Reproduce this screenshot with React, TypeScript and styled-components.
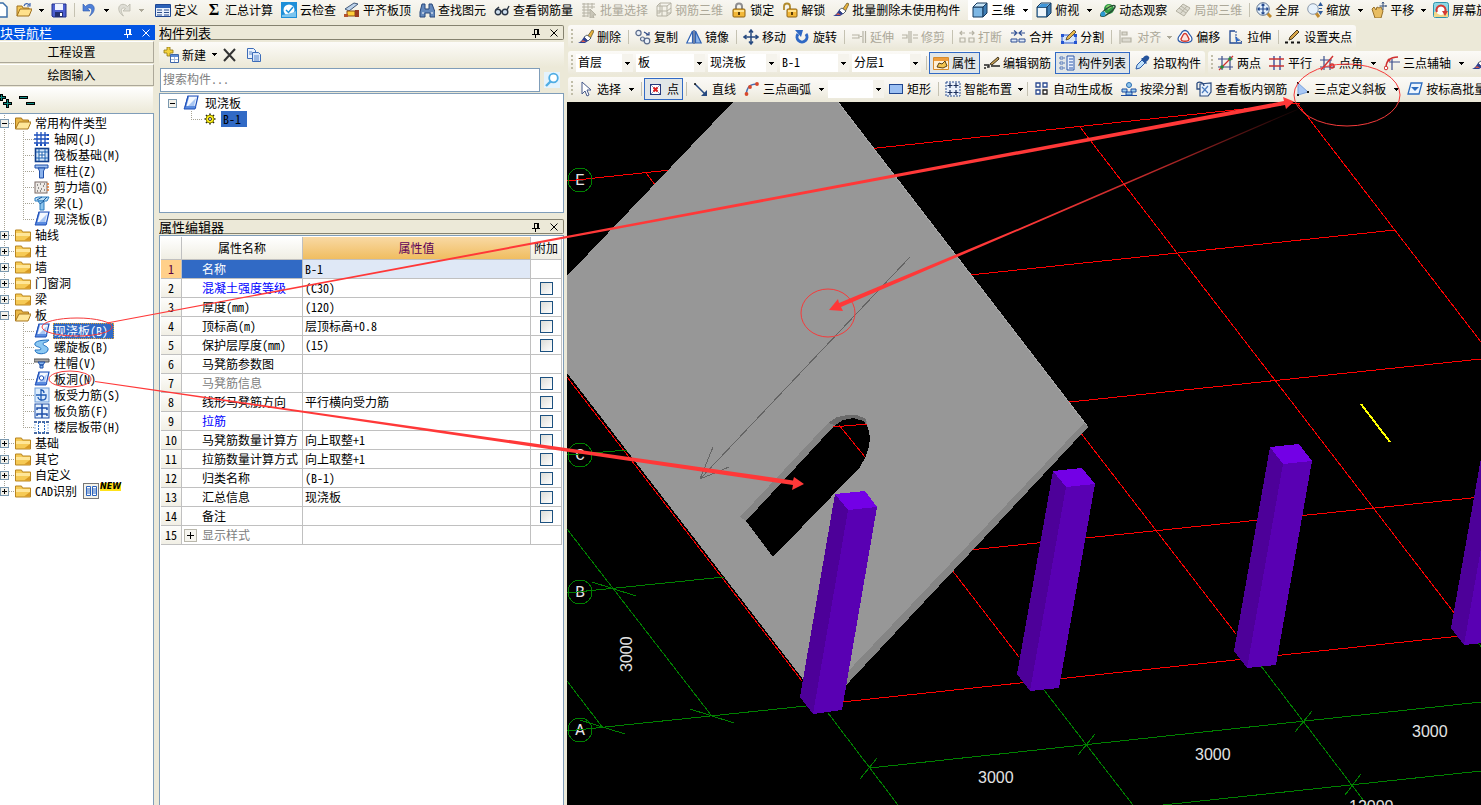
import React from "react";
import styled, { createGlobalStyle, css } from "styled-components";

const face = "#ece9d8";
const sunken = "#7f9db9";
const accent = "#316ac5";

const GlobalStyle = createGlobalStyle`
  * { box-sizing: border-box; }
  body {
    margin: 0;
    background: ${face};
    color: #000;
    font: 12px/16px "Noto Sans CJK SC", "Liberation Sans", sans-serif;
    font-feature-settings: "hwid";
  }
  button, input, select { font: inherit; font-feature-settings: inherit; color: inherit; margin: 0; }
`;

/* ---------- icons ---------- */

const slab = (
  <>
    <path d="M5 1h10l-2.500 11H2z" fill="#dce8fb" stroke="#1f4fb8" strokeWidth="1.200" />
    <path d="M5 1L2 12l-1 2h11l.8-2" fill="#5b8ce0" stroke="#1f4fb8" />
    <path d="M6 2h7.600l-2 9H3.500z" fill="#f5f9ff" />
    <path d="M13 3l-2 8H5z" fill="#a9c6f3" />
  </>
);
const brush = (
  <>
    <path d="M9 8l5-7 2 1-4 8z" fill="#e8b23c" stroke="#5a4a20" strokeWidth=".7" />
    <path d="M6 8l3-2 4 3-3 3z" fill="#fff" stroke="#345" strokeWidth=".8" />
    <path d="M6 8l4 4-3 2H0c3-1 4-3 6-6z" fill="#2c3f92" />
    <path d="M5 11l3 2H3z" fill="#d65a4a" />
  </>
);
const cube = (
  <>
    <path d="M1 5h10v10H1z" fill="#7db7e4" stroke="#173a5e" />
    <path d="M1 5l4-4h10l-4 4z" fill="#c7e4f7" stroke="#173a5e" />
    <path d="M11 5l4-4v10l-4 4z" fill="#3f7db4" stroke="#173a5e" />
  </>
);
const pencil = <path d="M5 11l1-3 7-7 2 2-7 7z" fill="#e8b84a" stroke="#4a3a20" strokeWidth=".8" />;

const glyphs: Record<string, React.ReactNode> = {
  page: <path d="M3 1h8l4 4v10H3z" fill="#fff" stroke="#3b6ea8" strokeWidth="1.500" />,
  open: (
    <>
      <path d="M1 14V4h5l1 2h6v2" fill="#f5c95a" stroke="#a0701c" />
      <path d="M1 14l3-7h12l-3 7z" fill="#ffe18c" stroke="#a0701c" />
      <path d="M8 4c1-3 4-3 5-1m1-2v3h-3" fill="none" stroke="#3d66b0" strokeWidth="1.200" />
    </>
  ),
  save: (
    <>
      <path d="M1 2h14v13H2l-1-1z" fill="#4c5fd0" stroke="#20308a" />
      <path d="M4 2h8v6H4z" fill="#eef2ff" />
      <path d="M4 10h8v5H4z" fill="#222f70" />
      <path d="M9 11h2v3H9z" fill="#fff" />
    </>
  ),
  undo: <path d="M2 2v7h7L6.500 6.500c4-2 6 2 2 7.500 7-4 6-13-1-11.500-1 .2-2 1-3 2z" fill="#4f80d8" stroke="#2a56aa" strokeWidth=".6" />,
  redo: <path d="M14 2v7H7l2.500-2.500c-4-2-6 2-2 7.500-7-4-6-13 1-11.500 1 .2 2 1 3 2z" fill="#deddd5" stroke="#b9b7ab" strokeWidth=".8" />,
  define: (
    <>
      <path d="M.5 2.500h15v12H.5z" fill="#e9f1fd" stroke="#1d4694" />
      <path d="M1 3h14v3H1z" fill="#2c62b8" />
      <path d="M2 8h5M2 10.500h5M2 13h5M9 8h5M9 10.500h5M9 13h5" stroke="#2c4f8c" />
    </>
  ),
  cloud: (
    <>
      <rect width="16" height="16" fill="#1e8fd8" />
      <circle cx="8" cy="8" r="5.500" fill="#fff" />
      <path d="M1 13c3-1 9-1 14-4v6H1z" fill="#7cc4ee" />
      <path d="M5 8l2.500 2.500L12 5" fill="none" stroke="#1e8fd8" strokeWidth="1.500" />
    </>
  ),
  level: (
    <>
      <path d="M1 7l9-6 4 1-9 7z" fill="#bcd2ea" stroke="#41597a" />
      <path d="M3 9h8v5H3z" fill="#ffcf3a" stroke="#8a4b12" />
      <path d="M11 8h4v7h-4z" fill="#9a3c24" />
      <path d="M0 12h4v3H0z" fill="#b5532c" />
    </>
  ),
  find: (
    <>
      <path d="M3 2h3v5h4V2h3l3 8v5h-5v-4H6v4H1v-5z" fill="#6489bd" stroke="#27477a" />
      <path d="M3 11h2M12 11h2" stroke="#fff" />
    </>
  ),
  glasses: (
    <g fill="#cfe0f0" stroke="#2b3646" strokeWidth="1.400">
      <circle cx="4" cy="10" r="2.800" />
      <circle cx="11" cy="10" r="2.800" />
      <path d="M6.500 9.500h2M13 8l2-4M1.500 8L5 5" fill="none" />
    </g>
  ),
  pick: (
    <g stroke="#b5b2a4" fill="none">
      <path d="M1 2h13M1 5h13M1 8h8M1 11h8M1 14h6M3 1v14M7 1v14M11 1v6" />
      <path d="M9 7l6 6-3 0 1 3-2-1-2 1z" fill="#c9c6b8" />
    </g>
  ),
  mesh: (
    <g stroke="#b5b2a4" fill="none">
      <path d="M1 4h10v10H1zM4 1h11v10h-4M1 4l3-3M11 4l4-3M11 14l4-3M4 1v10H1M1 9h10l4-3M6 4v10" />
    </g>
  ),
  lock: (
    <>
      <path d="M5 8V4.500a3 3 0 016 0V8" fill="none" stroke="#8e8e90" strokeWidth="2" />
      <rect x="2" y="7" width="12" height="8" rx="1" fill="#f3b838" stroke="#8e6212" />
      <path d="M3 8h10v2H3z" fill="#ffe08a" />
      <path d="M8 10v3" stroke="#5a3c06" strokeWidth="2" />
    </>
  ),
  unlock: (
    <>
      <path d="M2 8V4.500a3 3 0 016 0V7" fill="none" stroke="#b08a2c" strokeWidth="1.800" />
      <rect x="5" y="7" width="10" height="8" rx="1" fill="#f3b838" stroke="#8e6212" />
      <path d="M6 8h8v2H6z" fill="#ffe08a" />
      <path d="M10 10v3" stroke="#5a3c06" strokeWidth="2" />
    </>
  ),
  brush,
  cube,
  top: (
    <>
      {cube}
      <path d="M2 6h8v8H2z" fill="#eef5fb" />
      <path d="M2 5l3-3h8l-3 3z" fill="#3f95d8" />
    </>
  ),
  orbit: (
    <>
      <circle cx="9" cy="7" r="5" fill="#2f9a45" />
      <path d="M6 5c2-3 5-2 6 0l-4 3z" fill="#8ad06c" />
      <path d="M1 14c-2-3 12-13 14-10 1 3-11 12-14 10z" fill="none" stroke="#274a36" strokeWidth="1.400" />
      <circle cx="3" cy="12" r="2.500" fill="#2a9ad0" />
    </>
  ),
  partial: (
    <g fill="#dddbd0" stroke="#b5b2a4">
      <path d="M1 9l7-7 7 4-6 8z" />
      <path d="M4 6l7 5M6 4l7 5M5 12l7-8" fill="none" />
    </g>
  ),
  fit: (
    <>
      <path d="M11 11l4 4" stroke="#c08a30" strokeWidth="3" />
      <circle cx="7" cy="7" r="6.300" fill="#e3f0fc" stroke="#5a6f8e" />
      <path d="M7 2v10M2 7h10M5.500 3.500L7 2l1.500 1.500M5.500 10.500L7 12l1.500-1.500M3.500 5.500L2 7l1.500 1.500M10.500 5.500L12 7l-1.500 1.500" fill="none" stroke="#24498e" strokeWidth="1.200" />
    </>
  ),
  zoom: (
    <>
      <path d="M9 11l3 4" stroke="#c08a30" strokeWidth="3" />
      <circle cx="6" cy="7" r="5.300" fill="#e6f1fb" stroke="#8b99ab" />
      <path d="M13.500 0l2.500 4h-5zM13.500 13l2.500-4h-5zM12 6h3v1h-3z" fill="#2f5b9c" />
    </>
  ),
  pan: (
    <>
      <path d="M1 7l2-2 2 3 1-3 2 1 2-1 2 4-2 7H4z" fill="#e8bd62" stroke="#96702a" />
      <path d="M12 0v8M8.500 4h7M11 1.500L12 0l1 1.500M14.500 3l1 1-1 1" fill="none" stroke="#34507c" />
    </>
  ),
  rotateScreen: (
    <>
      <rect x=".5" y=".5" width="15" height="15" rx="2" fill="#8fd7e4" stroke="#2f93ae" />
      <path d="M1 10h14v5H1z" fill="#f2d78a" />
      <circle cx="8" cy="8" r="5" fill="#fff" />
      <path d="M4 10a4.500 4.500 0 118 0" fill="none" stroke="#d43a34" strokeWidth="2" />
      <path d="M9 9h6l-3 5z" fill="#d43a34" />
    </>
  ),
  copyShape: (
    <g fill="#eaf0f8" stroke="#5a6b8c" strokeWidth="1.200">
      <circle cx="3.500" cy="4" r="2.600" />
      <circle cx="12" cy="12" r="2.800" />
      <circle cx="7.500" cy="10" r="2" />
      <path d="M9 3l5 3m0-3v3h-3" fill="none" stroke="#2f4a86" />
    </g>
  ),
  mirror: (
    <g strokeWidth="1.200">
      <path d="M6.500 2v12H.8z" fill="#fff" stroke="#2f62b4" />
      <path d="M9.500 2v12h5.700z" fill="#8db5ea" stroke="#2f62b4" />
      <path d="M8 1v14" stroke="#1d3f80" />
    </g>
  ),
  move: (
    <path d="M8 1v14M1 8h14M6 3.500L8 1l2 2.500M6 12.500L8 15l2-2.500M3.500 6L1 8l2.500 2M12.500 6L15 8l-2.500 2" fill="none" stroke="#274a80" strokeWidth="1.500" />
  ),
  rotate: (
    <>
      <path d="M4 5a5 5 0 108 0" fill="none" stroke="#2f68c4" strokeWidth="3" />
      <path d="M1 1h8L7 8z" fill="#2f68c4" />
    </>
  ),
  extend: <path d="M1 6h7v3H1M9 7.500h2M12 2v12M14.500 2v12" fill="none" stroke="#b5b2a4" strokeWidth="1.200" />,
  trim: <path d="M0 6h5v3H0M7 2v12M9 2v12M11 6h5M11 9h5" fill="none" stroke="#b5b2a4" strokeWidth="1.200" />,
  breakUp: <path d="M1 9h5v4H1zM10 9h5v4h-5zM1 4h5M10 4h5M3 2L1 4l2 2M13 2l2 2-2 2" fill="none" stroke="#b5b2a4" strokeWidth="1.200" />,
  merge: (
    <>
      <path d="M1 10h6v3H1zM9 10h6v3H9z" fill="#dfe9f8" stroke="#2f4f94" />
      <path d="M1 4h5M10 4h5M4 1.500L7 4 4 6.500M12 1.500L9 4l3 2.500" fill="none" stroke="#2f4f94" strokeWidth="1.200" />
    </>
  ),
  split: (
    <>
      <path d="M1 6h14v8H1z" fill="#d5e5fa" stroke="#2454d0" />
      <path d="M0 5h3v3H0zM13 5h3v3h-3zM0 12h3v3H0zM13 12h3v3h-3z" fill="#2454d0" />
      {pencil}
    </>
  ),
  align: <path d="M2 1v14M4 3h5v3H4zM4 9h9v4H4z" fill="#dcdad0" stroke="#b5b2a4" strokeWidth="1.200" />,
  offset: (
    <>
      <path d="M5 3c2-2 4-2 6 0 1 3 4 4 4 7 0 5-14 5-14 0 0-3 3-4 4-7z" fill="#fff" stroke="#2c5ba8" strokeWidth="1.200" />
      <path d="M6 6c1-2 3-2 4 0l2 4c0 3-8 3-8 0z" fill="#fbe3df" stroke="#d2382c" strokeWidth="1.400" />
    </>
  ),
  stretch: (
    <>
      <path d="M7 2H2v12h12" fill="none" stroke="#234a94" strokeWidth="1.300" />
      <path d="M8 2v6M8 8l6 5" stroke="#234a94" strokeDasharray="2 1" />
      <path d="M7 7l5 5H9l1 3-2-2z" fill="#2f68c4" />
    </>
  ),
  grips: (
    <>
      <path d="M0 13.500h3M6 13.500h3M12 13.500h3" stroke="#111" strokeWidth="2" />
      <path d="M4 11l1-3 7-7 2 2-7 7z" fill="#d8a64a" stroke="#4a3a20" />
    </>
  ),
  props: (
    <>
      <path d="M.5 2.500h15v12H.5z" fill="#fff0d4" stroke="#d88c2c" />
      <path d="M1 3h14v3H1z" fill="#ef9d3c" />
      <path d="M4 12l2-4 3 1 3-3 2 5-4 2z" fill="#f2c44f" stroke="#5a4216" />
    </>
  ),
  editBar: (
    <>
      <path d="M0 10h5v2H3M7 11h9M0 13h2" stroke="#222" strokeWidth="1.300" fill="none" />
      <path d="M6 9l8-7 1 2-7 6z" fill="#c7a154" stroke="#3f3420" />
    </>
  ),
  list: (
    <>
      <path d="M8 1h7v14H8z" fill="#e8f0fc" stroke="#2c58aa" />
      <path d="M10 4h4M10 7h4M10 10h4M10 13h4" stroke="#2c58aa" />
      <path d="M1 2h3v2H1zM1 7h3v2H1zM1 12h3v2H1z" fill="#fff" stroke="#5579b6" />
      <path d="M5 3h2M5 8h2M5 13h2" stroke="#5579b6" strokeDasharray="1 1" />
    </>
  ),
  dropper: (
    <>
      <path d="M2 14l1-4 5-5 3 3-5 5z" fill="#bfe0fa" stroke="#2c5ba8" />
      <path d="M7 4l5 5 1-1-1-1c4-3 4-5 2-6s-4 0-5 2L8 3z" fill="#26549c" />
    </>
  ),
  twoPoint: (
    <>
      <path d="M0 4h15M0 12h15M4 1v14M12 1v14" stroke="#3c4f8c" strokeWidth="1.200" />
      <path d="M1 15L15 1" stroke="#d03030" strokeWidth="1.200" />
      <circle cx="4" cy="12" r="1.800" fill="#2b8a35" />
      <circle cx="12" cy="4" r="1.800" fill="#2b8a35" />
    </>
  ),
  parallel: (
    <>
      <path d="M5 1v14M11 1v14" stroke="#3c4f9c" strokeWidth="1.400" />
      <path d="M0 4h15M0 11h15" stroke="#c93434" strokeWidth="1.400" />
    </>
  ),
  pointAngle: (
    <>
      <path d="M0 5h12M0 12h15M4 1v14M10 5v10" stroke="#3c4f8c" strokeWidth="1.200" />
      <path d="M1 15L13 1M12 9a2 2 0 100 4 2 2 0 000-4" fill="none" stroke="#d03030" strokeWidth="1.400" />
    </>
  ),
  arcAxis: (
    <>
      <path d="M8 4v11M5 7h11" stroke="#3c4f8c" strokeWidth="1.200" />
      <path d="M2 13C2 6 6 2 14 2" fill="none" stroke="#d03030" strokeWidth="1.500" />
      <circle cx="2" cy="13" r="1.800" fill="#fff" stroke="#d03030" />
      <circle cx="5" cy="5" r="1.500" fill="#d03030" />
    </>
  ),
  pointer: <path d="M4 1v12l3-3 2 5 2-1-2-5h4z" fill="#fff" stroke="#46598a" />,
  point: (
    <>
      <rect x="2.500" y="3.500" width="10" height="10" fill="#fff" stroke="#24387c" />
      <path d="M3 4l9 9M12 4l-9 9" stroke="#8a93b8" />
      <path d="M5.500 6.500l4 4M9.500 6.500l-4 4" stroke="#e02020" strokeWidth="2" />
    </>
  ),
  line: (
    <>
      <path d="M2 3l10 10" stroke="#274a80" strokeWidth="1.500" />
      <path d="M14 9v6H8z" fill="#274a80" />
      <circle cx="2" cy="3" r="1" fill="#111" />
    </>
  ),
  arc: (
    <>
      <path d="M2 14C3 6 6 3 13 3" fill="none" stroke="#4c6fae" strokeWidth="1.500" />
      <circle cx="2.500" cy="13" r="1.900" fill="#d8492c" />
      <circle cx="6" cy="6" r="1.900" fill="#d8492c" />
      <circle cx="13" cy="3" r="1.900" fill="#d8492c" />
    </>
  ),
  rect: <rect x="1.500" y="3.500" width="13" height="9" fill="#9cc0f2" stroke="#1f4690" />,
  smart: (
    <>
      <rect x="1" y="1" width="14" height="14" fill="#eaf1fb" stroke="#2b4f90" strokeDasharray="2 1" />
      <path d="M5 2v5M2.500 4.500h5M11 2v5M8.500 4.500h5M5 9v5M2.500 11.500h5M11 9v5M8.500 11.500h5" stroke="#1b2f5c" strokeWidth="1.200" />
    </>
  ),
  autoSlab: (
    <g fill="#fff" stroke="#2b4a90" strokeWidth="1.300">
      <path d="M2 2h4v4H2zM9 2h4v4H9zM2 9h4v4H2z" />
      <path d="M9 9h4v4H9z" stroke="#222" />
    </g>
  ),
  byBeam: (
    <>
      <circle cx="8" cy="4" r="2.500" fill="#8fc5ee" stroke="#2c6db0" />
      <path d="M1 8h5v3H1zM10 8h5v3h-5zM5 11h6v3H5z" fill="#9fd0f0" stroke="#1e4ea0" />
      <path d="M0 14.500h16" stroke="#1e4ea0" />
    </>
  ),
  viewBars: (
    <>
      <path d="M4 3l11-1v9l-3 4H4z" fill="#e9f2fc" stroke="#2c4c80" strokeWidth="1.200" />
      <path d="M6 6l6 6M12 5l-6 7" stroke="#4a7cc0" strokeWidth="1.200" />
      <path d="M1 2c3-2 7 0 7 3M1 2v6h3" fill="none" stroke="#2c4c80" strokeWidth="1.300" />
    </>
  ),
  slope: (
    <>
      <path d="M3 2v12l10-3z" fill="#a9c8f5" stroke="#7aa2dc" />
      <path d="M2 1h2v2H2zM2 13h2v2H2zM12 10h2v2h-2z" fill="#111" />
    </>
  ),
  byLevel: (
    <>
      <path d="M4 2h11l-3 11H1z" fill="#eef6fe" stroke="#2c6dc0" strokeWidth="1.300" />
      <path d="M4 6h8L8 10z" fill="#2c6dc0" />
    </>
  ),
  create: (
    <>
      <path d="M4 0h3v3h3v3H7v3H4V6H1V3h3z" fill="#f4d23c" stroke="#8f7612" strokeWidth=".8" />
      <path d="M7.500 7.500h8v8h-8z" fill="#fff" stroke="#3d65a8" />
      <path d="M8 8h7v2H8z" fill="#5b8ad6" />
      <path d="M8 12.500h7M11.500 10v5" stroke="#a8bcdc" />
    </>
  ),
  remove: <path d="M2 2l11 12M13 2L2 14" stroke="#333" strokeWidth="2" />,
  copy: (
    <>
      <path d="M1.500 1.500h6l2 2v8h-8z" fill="#eaf2fd" stroke="#3c6cb8" />
      <path d="M6.500 5.500h6l2 2v7h-8z" fill="#dce9fb" stroke="#3c6cb8" />
      <path d="M3 5h3M3 7h3M8 9h5M8 11h5M8 13h5" stroke="#5a88cc" />
    </>
  ),
  search: (
    <>
      <rect width="16" height="16" fill="#e4f3fd" />
      <circle cx="9.500" cy="6" r="4.300" fill="#fff" stroke="#50ade4" strokeWidth="1.800" />
      <path d="M6.500 9.500L2 14" stroke="#50ade4" strokeWidth="2.400" />
    </>
  ),
  folder: (
    <>
      <path d="M.5 14V3h6l1 2h8v9z" fill="#f6ca55" stroke="#b98521" />
      <path d="M1 6h14v3H1z" fill="#ffe698" />
      <path d="M9 13.500h6V9z" fill="#d99a24" />
    </>
  ),
  folderOpen: (
    <>
      <path d="M.5 14V3h6l1 2h6v3" fill="#e9b848" stroke="#a8761c" />
      <path d="M.5 14L4 7h12l-3 7z" fill="#ffe79a" stroke="#a8761c" />
    </>
  ),
  axisGrid: (
    <>
      <path d="M3 1v13M7 1v13M11 1v13M0 4h15M0 8h15M0 12h15" stroke="#1c4fbc" strokeWidth="1.300" />
      <path d="M13 3h2v2h-2zM13 7h2v2h-2zM2 13h2v2H2zM6 13h2v2H6zM10 13h2v2h-2z" fill="#1c4fbc" />
    </>
  ),
  raft: (
    <>
      <rect x="1.500" y="1.500" width="13" height="13" fill="#cfe4f8" stroke="#123f8c" strokeWidth="1.600" />
      <rect x="5" y="5" width="6" height="6" fill="#fff" stroke="#1f62b0" />
      <path d="M5 2v3M11 2v3M5 11v3M11 11v3M2 5h3M2 11h3M11 5h3M11 11h3M8 5v6M5 8h6" stroke="#1f62b0" />
    </>
  ),
  column: (
    <>
      <path d="M1 2h13v3H1z" fill="#9fc0f0" stroke="#1d4ea8" />
      <path d="M4 5h7L9.500 8v7h-4V8z" fill="#8ab2ec" stroke="#1d4ea8" />
    </>
  ),
  wall: (
    <>
      <rect x="1" y="3" width="12" height="11" fill="#eeeae6" stroke="#7a6a66" />
      <path d="M3 6h1M6 5h1M9 7h1M4 9h1M7 10h1M10 11h1M3 12h1M10 5h1M6 12h1" stroke="#333" />
      <path d="M13 5h2M13 8h2M13 11h2" stroke="#e07830" strokeWidth="1.500" />
    </>
  ),
  beam: (
    <>
      <path d="M1 3l3-1h11l-2 4H1z" fill="#bfe0f6" stroke="#2b7cc0" />
      <path d="M4 6h6v9H6V9z" fill="#8cc4ec" stroke="#2b7cc0" />
      <path d="M3 5l5-3M9 6l4-4M6 9l4-3" stroke="#1b5a9c" />
    </>
  ),
  slab,
  spiral: <path d="M15 1C4 1 0 3 1 6c1 2 6 2 6 4 0 1-3 1-6 1 0 5 12 5 13 0 1-4-5-4-5-6 0-2 4-1 6-4z" fill="#8cc8f2" stroke="#1f6fc0" />,
  cap: (
    <>
      <path d="M0 4h15v3H0z" fill="#a9a9a9" stroke="#555" />
      <path d="M4 7h7l-2 3H6zM6 10h3v3H6z" fill="#8ab8ee" stroke="#1d4ea8" />
    </>
  ),
  opening: (
    <>
      {slab}
      <circle cx="7.500" cy="7" r="2.200" fill="#fff" stroke="#1f4fb8" />
    </>
  ),
  mainBar: (
    <>
      <rect x="1" y="1" width="14" height="14" fill="#dcecfc" stroke="#6c9bd8" />
      <path d="M2 8h10v2c0 4-8 4-8 0M7 2v12M7 3c2 0 3 1 3 3" fill="none" stroke="#1d5ab4" strokeWidth="1.300" />
    </>
  ),
  negBar: (
    <>
      <rect x="1" y="1" width="14" height="14" fill="#e8f2fd" stroke="#1d4ea8" />
      <path d="M8 1v14M3 7V5h10v2M3 13v-2h10v2" fill="none" stroke="#1d4ea8" strokeWidth="1.500" />
    </>
  ),
  strip: (
    <>
      <path d="M0 3h15M0 14h15" stroke="#123c86" strokeDasharray="3 1" strokeWidth="1.500" />
      <path d="M4.500 3v11M10.500 3v11" stroke="#2b6cc4" strokeDasharray="2 1" />
      <path d="M1 5v7M14 5v7" stroke="#8fb5e6" strokeDasharray="2 1" />
    </>
  ),
  cad: (
    <>
      <rect x=".5" y=".5" width="15" height="15" fill="#f4f2ea" stroke="#777" />
      <path d="M3.500 3.500h4v9h-4zM9.500 3.500h4v9h-4z" fill="#fff" stroke="#2b62bc" />
      <path d="M4 6h3M4 8h3M4 10h3M10 6h3M10 8h3M10 10h3" stroke="#2b62bc" />
    </>
  ),
  gear: (
    <>
      <path d="M8 2.500v11M2.500 8h11M4 4l8 8M12 4l-8 8" stroke="#222" strokeWidth="1.600" />
      <circle cx="8" cy="8" r="4" fill="#fff01a" stroke="#8f8800" />
      <circle cx="8" cy="8" r="1.500" fill="#fff" stroke="#333" />
    </>
  ),
};

const Svg = styled.svg`
  flex: none;
  display: block;
`;

const Icon = ({ name, size = 16 }: { name: string; size?: number }) => (
  <Svg width={size} height={size} viewBox="0 0 16 16" fill="none" aria-hidden="true">
    {glyphs[name]}
  </Svg>
);

const Caret = () => (
  <Svg width="5" height="3" viewBox="0 0 5 3" shapeRendering="crispEdges" aria-hidden="true">
    <path d="M0 0h5L2.500 3z" fill="currentColor" />
  </Svg>
);

/* ---------- tool bars ---------- */

const ToolButton = styled.button<{ $on?: boolean }>`
  flex: none;
  display: flex;
  align-items: center;
  gap: 3px;
  height: 22px;
  padding: 0 4px;
  border: 0;
  background: none;
  white-space: nowrap;
  &:disabled { color: #aca899; }
  ${(p) => p.$on && css`
    background: #e1e6e8;
    box-shadow: inset 0 0 0 1px ${accent};
  `}
`;

const MenuButton = styled.button<{ $width: number }>`
  flex: none;
  display: flex;
  align-items: center;
  justify-content: center;
  width: ${(p) => p.$width}px;
  height: 22px;
  padding: 0;
  border: 0;
  background: none;
  &:disabled { color: #aca899; }
`;

const Divider = styled.span`
  flex: none;
  width: 1px;
  height: 14px;
  margin: 0 2px 0 3px;
  background: #c5c2b2;
`;

const Grip = styled.span`
  flex: none;
  width: 2px;
  height: 16px;
  margin: 0 1px 0 3px;
  background: repeating-linear-gradient(#c1bea9 0 2px, transparent 2px 4px);
`;

const Sigma = styled.span`
  width: 16px;
  text-align: center;
  font: bold 16px/16px "Liberation Serif", serif;
`;

const Band = styled.div<{ $grow?: boolean }>`
  display: flex;
  align-items: center;
  flex: ${(p) => (p.$grow ? "1 0 auto" : "none")};
  height: 24px;
  border-radius: 3px;
  background: linear-gradient(#fbfaf7, #f5f3ec 50%, #ebe8d9);
`;

const TopBar = styled.div`
  display: flex;
  align-items: center;
  flex: none;
  height: 20px;
  margin: 0 0 5px -12px;
  overflow: hidden;
  background: linear-gradient(#f8f7f2, #efecdf);
`;

const Space = styled.span`
  flex: none;
  width: 4px;
`;

const ViewMode = styled.span`
  display: flex;
  flex: none;
  background: #fff;
`;

type Tool = { icon: string; label?: string; menu?: number; off?: boolean; on?: boolean; title?: string };

const ToolItem = ({ icon, label, menu, off, on, title }: Tool) => (
  <>
    <ToolButton type="button" disabled={off} $on={on} aria-label={label ? undefined : title} aria-pressed={on}>
      {icon === "sigma" ? <Sigma aria-hidden="true">Σ</Sigma> : <Icon name={icon} />}
      {label}
    </ToolButton>
    {menu ? (
      <MenuButton type="button" disabled={off} $width={menu} aria-label={`${label ?? title} 菜单`}>
        <Caret />
      </MenuButton>
    ) : null}
  </>
);

const Tools = ({ items }: { items: (Tool | "|")[] }) => (
  <>{items.map((t, i) => (t === "|" ? <Divider key={i} /> : <ToolItem key={i} {...t} />))}</>
);

const fileTools: (Tool | "|")[] = [
  { icon: "page", title: "新建" },
  { icon: "open", title: "打开", menu: 11 },
  { icon: "save", title: "保存" },
  "|",
  { icon: "undo", title: "撤销", menu: 11 },
  { icon: "redo", title: "恢复", menu: 11, off: true },
];

const mainTools: Tool[] = [
  { icon: "define", label: "定义" },
  { icon: "sigma", label: "汇总计算" },
  { icon: "cloud", label: "云检查" },
  { icon: "level", label: "平齐板顶" },
  { icon: "find", label: "查找图元" },
  { icon: "glasses", label: "查看钢筋量" },
  { icon: "pick", label: "批量选择", off: true },
  { icon: "mesh", label: "钢筋三维", off: true },
  { icon: "lock", label: "锁定" },
  { icon: "unlock", label: "解锁" },
  { icon: "brush", label: "批量删除未使用构件" },
];

const viewTools: (Tool | "|")[] = [
  { icon: "top", label: "俯视", menu: 13 },
  { icon: "orbit", label: "动态观察" },
  { icon: "partial", label: "局部三维", off: true },
  "|",
  { icon: "fit", label: "全屏" },
  { icon: "zoom", label: "缩放", menu: 13 },
  { icon: "pan", label: "平移", menu: 11 },
  { icon: "rotateScreen", label: "屏幕旋" },
];

const editTools: (Tool | "|")[] = [
  { icon: "brush", label: "删除" },
  "|",
  { icon: "copyShape", label: "复制" },
  { icon: "mirror", label: "镜像" },
  "|",
  { icon: "move", label: "移动" },
  { icon: "rotate", label: "旋转" },
  "|",
  { icon: "extend", label: "延伸", off: true },
  { icon: "trim", label: "修剪", off: true },
  "|",
  { icon: "breakUp", label: "打断", off: true },
  { icon: "merge", label: "合并" },
  { icon: "split", label: "分割" },
  "|",
  { icon: "align", label: "对齐", menu: 8, off: true },
  { icon: "offset", label: "偏移" },
  { icon: "stretch", label: "拉伸" },
  "|",
  { icon: "grips", label: "设置夹点" },
];

const componentTools: Tool[] = [
  { icon: "props", label: "属性", on: true },
  { icon: "editBar", label: "编辑钢筋" },
  { icon: "list", label: "构件列表", on: true },
  { icon: "dropper", label: "拾取构件" },
];

const axisTools: Tool[] = [
  { icon: "twoPoint", label: "两点" },
  { icon: "parallel", label: "平行" },
  { icon: "pointAngle", label: "点角", menu: 13 },
  { icon: "arcAxis", label: "三点辅轴", menu: 13 },
  { icon: "brush", title: "删除辅轴" },
];

const drawTools: (Tool | "|")[] = [
  { icon: "pointer", label: "选择", menu: 13 },
  "|",
  { icon: "point", label: "点", on: true },
  "|",
  { icon: "line", label: "直线" },
  { icon: "arc", label: "三点画弧", menu: 13 },
];

const layoutTools: (Tool | "|")[] = [
  { icon: "rect", label: "矩形" },
  "|",
  { icon: "smart", label: "智能布置", menu: 8 },
  "|",
  { icon: "autoSlab", label: "自动生成板" },
  { icon: "byBeam", label: "按梁分割" },
  { icon: "viewBars", label: "查看板内钢筋" },
  { icon: "slope", label: "三点定义斜板", menu: 13 },
  { icon: "byLevel", label: "按标高批量" },
];

const ComboBox = styled.span<{ $width: number }>`
  flex: none;
  display: grid;
  width: ${(p) => p.$width}px;
  height: 18px;
  background: #fff;
  select {
    grid-area: 1 / 1;
    width: 100%;
    height: 16px;
    padding: 0 12px 0 2px;
    border: 0;
    background: none;
    appearance: none;
  }
`;

const ComboArrow = styled.span`
  grid-area: 1 / 1;
  justify-self: end;
  display: flex;
  align-items: center;
  justify-content: center;
  width: 11px;
  background: #f5f3ec;
  pointer-events: none;
`;

const ComboGroup = styled.div`
  display: flex;
  gap: 3px;
  padding: 0 2px;
`;

const Combo = ({ label, value, width }: { label: string; value: string; width: number }) => (
  <ComboBox $width={width}>
    <select aria-label={label} defaultValue={value}>
      <option>{value}</option>
    </select>
    <ComboArrow>
      <Caret />
    </ComboArrow>
  </ComboBox>
);

/* ---------- page frame ---------- */

const Page = styled.div`
  position: relative;
  display: flex;
  flex-direction: column;
  min-height: 100vh;
  overflow: hidden;
`;

const Workspace = styled.div`
  flex: 1;
  display: flex;
  min-width: 0;
`;

const Nav = styled.nav`
  display: flex;
  flex-direction: column;
  flex: none;
  width: 155px;
  margin-right: 4px;
`;

const TitleActions = styled.span`
  display: flex;
  align-items: center;
  gap: 8px;
`;

const TitleButton = styled.button`
  display: block;
  padding: 0;
  border: 0;
  background: none;
`;

const NavTitle = styled.header`
  display: flex;
  align-items: center;
  justify-content: space-between;
  height: 15px;
  margin-bottom: 1px;
  padding-right: 4px;
  background: #0054e3;
  color: #fff;
  font-size: 13px;
`;

const PanelTitle = styled.header`
  display: flex;
  align-items: center;
  justify-content: space-between;
  height: 15px;
  padding-right: 4px;
  border: 1px solid #85826f;
  border-left: 0;
  border-radius: 0 2px 2px 0;
  font-size: 13px;
`;

const PaneActions = () => (
  <TitleActions>
    <TitleButton type="button" aria-label="固定">
      <Svg width="10" height="10" viewBox="0 0 10 10" fill="none" stroke="currentColor" shapeRendering="crispEdges">
        <path d="M3.500 1v5M3 1.500h4M6 1v5M7 1v5M1 6.500h8M4.500 7v3" />
      </Svg>
    </TitleButton>
    <TitleButton type="button" aria-label="关闭">
      <Svg width="10" height="10" viewBox="0 0 10 10" fill="none" stroke="currentColor">
        <path d="M1.500 1.500l7 7M8.500 1.500l-7 7" />
      </Svg>
    </TitleButton>
  </TitleActions>
);

const NavSection = styled.button`
  height: 22px;
  margin: 0 1px 1px 0;
  padding: 0 10px 0 0;
  border: 1px solid;
  border-color: #fff #aca899 #aca899 ${face};
  border-left: 0;
  background: ${face};
`;

const NavTools = styled.div`
  display: flex;
  align-items: center;
  gap: 7px;
  height: 26px;
  margin-right: 2px;
  background: linear-gradient(#fff, ${face});
`;

const NavTree = styled.div`
  flex: 1;
  margin-right: 1px;
  padding-top: 1px;
  border: 1px solid ${sunken};
  border-width: 1px 1px 0 0;
  background: #fff;
`;

const dotsDown = "repeating-linear-gradient(to bottom, #a7a394 0 1px, transparent 1px 2px)";
const dotsAcross = "repeating-linear-gradient(to right, #a7a394 0 1px, transparent 1px 2px)";

const Branch = styled.div<{ $last?: boolean }>`
  display: flex;
  align-items: center;
  height: 16px;
  gap: 6px;
  background:
    ${dotsDown} 4px 0 / 1px ${(p) => (p.$last ? "8px" : "100%")} no-repeat,
    ${dotsAcross} 9px 8px / 6px 1px no-repeat;
`;

const Leaf = styled.div<{ $last?: boolean }>`
  display: flex;
  align-items: center;
  height: 16px;
  gap: 3px;
  padding-left: 34px;
  background:
    ${dotsDown} 4px 0 / 1px 100% no-repeat,
    ${dotsDown} 23px 0 / 1px ${(p) => (p.$last ? "8px" : "100%")} no-repeat,
    ${dotsAcross} 23px 8px / 11px 1px no-repeat;
`;

const NodeText = styled.span<{ $selected?: boolean }>`
  height: 16px;
  padding: 0 1px;
  white-space: nowrap;
  ${(p) => p.$selected && css`
    padding-right: 6px;
    background: ${accent};
    color: #fff;
    outline: 1px dotted #e0a030;
    outline-offset: -1px;
  `}
`;

const FolderText = styled.span`
  margin-left: -2px;
`;

const Expander = styled.button`
  padding: 0;
  border: 0;
  background: none;
`;

const Toggle = ({ open, name }: { open: boolean; name: string }) => (
  <Expander type="button" aria-label={name} aria-expanded={open}>
    <Svg width="9" height="9" viewBox="0 0 9 9" shapeRendering="crispEdges">
      <rect x=".5" y=".5" width="8" height="8" fill="#f3f1ea" stroke="#7a98af" />
      <path d={open ? "M2 4.500h5" : "M2 4.500h5M4.500 2v5"} stroke="#000" />
    </Svg>
  </Expander>
);

const NewTag = styled.b`
  margin-left: -5px;
  align-self: flex-start;
  background: #ffe21a;
  font: italic bold 8px/8px "DejaVu Sans", sans-serif;
`;

type Group = { name: string; children?: { icon: string; name: string; selected?: boolean }[] };

const groups: Group[] = [
  {
    name: "常用构件类型",
    children: [
      { icon: "axisGrid", name: "轴网(J)" },
      { icon: "raft", name: "筏板基础(M)" },
      { icon: "column", name: "框柱(Z)" },
      { icon: "wall", name: "剪力墙(Q)" },
      { icon: "beam", name: "梁(L)" },
      { icon: "slab", name: "现浇板(B)" },
    ],
  },
  { name: "轴线" },
  { name: "柱" },
  { name: "墙" },
  { name: "门窗洞" },
  { name: "梁" },
  {
    name: "板",
    children: [
      { icon: "slab", name: "现浇板(B)", selected: true },
      { icon: "spiral", name: "螺旋板(B)" },
      { icon: "cap", name: "柱帽(V)" },
      { icon: "opening", name: "板洞(N)" },
      { icon: "mainBar", name: "板受力筋(S)" },
      { icon: "negBar", name: "板负筋(F)" },
      { icon: "strip", name: "楼层板带(H)" },
    ],
  },
  { name: "基础" },
  { name: "其它" },
  { name: "自定义" },
  { name: "CAD识别" },
];

/* ---------- centre panels ---------- */

const Panels = styled.div`
  display: flex;
  flex-direction: column;
  flex: none;
  width: 405px;
  margin-right: 3px;
`;

const PanelTools = styled.div`
  display: flex;
  align-items: center;
  height: 25px;
  margin: 2px 0 1px;
  background: linear-gradient(#fcfbf8, ${face});
`;

const SearchRow = styled.div`
  display: flex;
  align-items: center;
  height: 24px;
  padding-left: 1px;
  margin-bottom: 1px;
  input {
    flex: 1;
    min-width: 0;
    height: 24px;
    padding: 0 2px 4px;
    border: 1px solid ${sunken};
    background: #fff;
    &::placeholder { color: #808080; opacity: 1; }
  }
`;

const ComponentTree = styled.div`
  height: 120px;
  margin-bottom: 6px;
  padding: 1px 0 0 8px;
  border: 1px solid ${sunken};
  background: #fff;
`;

const TreeRow = styled.div<{ $child?: boolean }>`
  display: flex;
  align-items: center;
  gap: ${(p) => (p.$child ? "3px" : "6px")};
  height: 16px;
  ${(p) => p.$child && css`
    padding-left: 34px;
    background:
      ${dotsDown} 23px 0 / 1px 8px no-repeat,
      ${dotsAcross} 23px 8px / 11px 1px no-repeat;
  `}
`;

const Picked = styled.span`
  width: 26px;
  padding-left: 2px;
  background: ${accent};
`;

const GridBox = styled.div`
  flex: 1;
  margin-top: 1px;
  padding: 1px 1px 0;
  border: 1px solid ${sunken};
  border-bottom: 0;
  background: #fff;
`;

const Grid = styled.table`
  width: 100%;
  table-layout: fixed;
  border-collapse: separate;
  border-spacing: 0;
  th, td {
    height: 19px;
    padding: 0;
    border: 1px solid #c0c0c0;
    border-width: 0 1px 1px 0;
    line-height: 18px;
    font-weight: normal;
    text-align: left;
    white-space: nowrap;
    overflow: hidden;
  }
  thead th {
    height: 23px;
    text-align: center;
    background: linear-gradient(#fff, #f0eee3);
  }
`;

const ValueHead = styled.th`
  && {
    background: linear-gradient(#f9d9a4, #f0bd60);
    color: #5c0058;
  }
`;

const RowNumber = styled.th<{ $current?: boolean }>`
  && {
    text-align: center;
    background: ${(p) => (p.$current ? "#ffd08a" : "linear-gradient(#fdfdfb, #f1efe5)")};
    color: ${(p) => (p.$current ? "#5c0040" : "#000")};
  }
`;

const NameCell = styled.td<{ $tone?: string; $current?: boolean }>`
  color: ${(p) => (p.$tone === "blue" ? "#0000ff" : p.$tone === "gray" ? "#808080" : "#000")};
  ${(p) => p.$current && css`
    background: ${accent};
    color: #fff;
  `}
`;

const NameInner = styled.span<{ $toggle?: boolean }>`
  display: flex;
  align-items: center;
  gap: 5px;
  padding-left: ${(p) => (p.$toggle ? "2px" : "20px")};
`;

const ValueCell = styled.td<{ $current?: boolean }>`
  && { padding-left: 2px; }
  background: ${(p) => (p.$current ? "#dfe8f6" : "#fff")};
`;

const CheckCell = styled.td`
  && { text-align: center; }
  input {
    display: block;
    width: 13px;
    height: 13px;
    margin: 0 auto;
    border: 1px solid #1c5180;
    appearance: none;
    background: linear-gradient(135deg, #dcdcd7, #fff);
  }
`;

const GroupToggle = styled.button`
  display: block;
  padding: 0;
  border: 0;
  background: none;
`;

type Property = { name: string; value?: string; tone?: string; check?: boolean; group?: boolean };

const properties: Property[] = [
  { name: "名称", value: "B-1" },
  { name: "混凝土强度等级", value: "(C30)", tone: "blue", check: true },
  { name: "厚度(mm)", value: "(120)", check: true },
  { name: "顶标高(m)", value: "层顶标高+0.8", check: true },
  { name: "保护层厚度(mm)", value: "(15)", check: true },
  { name: "马凳筋参数图" },
  { name: "马凳筋信息", tone: "gray", check: true },
  { name: "线形马凳筋方向", value: "平行横向受力筋", check: true },
  { name: "拉筋", tone: "blue", check: true },
  { name: "马凳筋数量计算方", value: "向上取整+1", check: true },
  { name: "拉筋数量计算方式", value: "向上取整+1", check: true },
  { name: "归类名称", value: "(B-1)", check: true },
  { name: "汇总信息", value: "现浇板", check: true },
  { name: "备注", check: true },
  { name: "显示样式", tone: "gray", group: true },
];

/* ---------- model view ---------- */

const ViewColumn = styled.main`
  display: flex;
  flex-direction: column;
  flex: 1;
  min-width: 0;
`;

const Bars = styled.div`
  display: flex;
  flex-direction: column;
  gap: 2px;
  padding: 0 0 1px 1px;
`;

const BarRow = styled.div`
  display: flex;
  gap: 3px;
  overflow: hidden;
`;

const Canvas = styled.div`
  flex: 1;
  display: flex;
  min-height: 0;
  background: #000;
  overflow: hidden;
`;

const CanvasSvg = styled.svg`
  flex: 1;
  min-width: 0;
  text {
    font-family: "Liberation Sans", sans-serif;
    font-size: 16px;
    fill: #e4e4e4;
  }
`;

const AxisName = styled.text`
  && {
    font-family: "Liberation Mono", monospace;
    font-size: 16px;
  }
`;

const MarkLayer = styled.svg`
  position: absolute;
  left: 0;
  top: 0;
  width: 100%;
  height: 100%;
  pointer-events: none;
`;

const pillars = [
  { top: "835,494 865,491 877,507 848,510", left: "835,494 848,510 813,714 800,697", right: "848,510 877,507 842,710 813,714" },
  { top: "1053,471 1082,468 1095,484 1066,487", left: "1053,471 1066,487 1030,691 1017,674", right: "1066,487 1095,484 1059,688 1030,691" },
  { top: "1270,447 1299,444 1312,461 1283,464", left: "1270,447 1283,464 1247,668 1234,651", right: "1283,464 1312,461 1276,665 1247,668" },
  { top: "1487,424 1516,421 1529,438 1500,441", left: "1487,424 1500,441 1464,645 1451,628", right: "1500,441 1529,438 1493,642 1464,645" },
];

const axes = [
  { name: "E", y: 180 },
  { name: "C", y: 455 },
  { name: "B", y: 592 },
  { name: "A", y: 730 },
];

const Model = () => (
  <CanvasSvg role="img" aria-label="三维模型">
    <g transform="translate(-567 -102)">
      {axes.map((a) => (
        <AxisName key={a.name} x="580" y={a.y + 5} textAnchor="middle">
          {a.name}
        </AxisName>
      ))}
      <g shapeRendering="crispEdges">
        <path
          stroke="#f00"
          fill="none"
          d="M567 181L1300 103M646 173L1019 657M567 377L802 681M970 275L1395 230M1060 403L1481 359M960 551L1481 497M842 702L1460 636M1060 406L1236 634M1080 127L1455 614M1297 103L1481 342"
        />
        <path
          stroke="#008000"
          fill="none"
          d="M567 455L627 450M567 593L724 577M567 731L806 706M567 529L711 715M567 681L603 728M592 582L636 596M690 709L734 723M580 720L625 734M828 713L898 805L930 845M860 779L877 758M870 768L1481 702M1078 755L1095 734M1295 732L1312 711M1044 690L1133 805M1261 666L1367 805M1163 805L1481 771M1345 795L1361 774M1478 643L1486 652"
        />
        <polygon points="733,102 838,102 1088,427 846,685 820,700 802,678 567,373 567,276" fill="#979797" />
        <path d="M838 102L1088 427" stroke="#a8a8a8" strokeWidth="1" />
        <polygon points="1084,423 1088,427 835,697 835,685" fill="#858585" />
        <polygon points="740,517 828,423 837,417 847,415 857,415 866,419 868,428 840,440 746,521" fill="#858585" />
        <polygon points="828,423 837,417 847,415 857,415 866,419 866,424 838,426" fill="#6b6b6b" />
        <polygon points="746,521 834,426 843,420 853,418 864,421 868,428 870,437 869,447 865,458 860,467 773,557" fill="#000" />
        <path d="M833 427L867 424M839 425L865 457" stroke="#f00" />
        <path d="M910 257L700 479M700 479L713 447M700 479L729 467" stroke="#646464" fill="none" />
        {pillars.map((p) => (
          <g key={p.top}>
            <polygon points={p.left} fill="#4d0099" />
            <polygon points={p.right} fill="#5900b3" />
            <polygon points={p.top} fill="#7300e6" />
          </g>
        ))}
        <path d="M1361 404L1390 442" stroke="#ff0" strokeWidth="2" />
        {axes.map((a) => (
          <circle key={a.name} cx="580" cy={a.y} r="12" fill="none" stroke="#008000" />
        ))}
      </g>
      <text x="978" y="783">3000</text>
      <text x="1195" y="760">3000</text>
      <text x="1412" y="737">3000</text>
      <text x="1349" y="812">12000</text>
      <text transform="translate(632 672) rotate(-90)">3000</text>
    </g>
  </CanvasSvg>
);

const Marks = () => (
  <MarkLayer aria-hidden="true">
    <defs>
      <linearGradient id="fade" gradientUnits="userSpaceOnUse" x1="1020" y1="229" x2="1310" y2="104">
        <stop offset="0" stopColor="#ff3838" />
        <stop offset="0.5" stopColor="#ff3838" stopOpacity="0.7" />
        <stop offset="1" stopColor="#ff3838" stopOpacity="0" />
      </linearGradient>
    </defs>
    <g fill="none" stroke="#f53b3b">
      <ellipse cx="77" cy="327" rx="35" ry="9" />
      <ellipse cx="70" cy="379" rx="21" ry="8" />
      <ellipse cx="828" cy="313" rx="27" ry="24" />
      <ellipse cx="1347" cy="95" rx="53" ry="31" />
    </g>
    <g fill="#ff3838">
      <polygon points="107,322.500 1284,101 1283,97 1294,101.500 1286,109 1285,105 107,323.500" />
      <polygon points="95,381 793,480.500 794,477 804,484 792,490 793,485 95,382" />
      <polygon points="1020,228 839,303 838,299 829,310 843,311 841,307 1020,230" />
    </g>
    <polygon points="1020,228 1310,103.500 1310,104.500 1020,230" fill="url(#fade)" />
  </MarkLayer>
);

export default function App() {
  return (
    <Page>
      <GlobalStyle />
      <TopBar>
        <Tools items={fileTools} />
        <Space />
        <Tools items={mainTools} />
        <Space />
        <ViewMode>
          <ToolItem icon="cube" label="三维" menu={13} />
        </ViewMode>
        <Tools items={viewTools} />
      </TopBar>
      <Workspace>
        <Nav>
          <NavTitle>
            块导航栏
            <PaneActions />
          </NavTitle>
          <NavSection type="button">工程设置</NavSection>
          <NavSection type="button">绘图输入</NavSection>
          <NavTools>
            <TitleButton type="button" aria-label="全部展开">
              <Svg width="12" height="16" viewBox="0 0 12 16" shapeRendering="crispEdges">
                <path d="M0 5.500h6M1.500 2v7M3 11.500h9M7.500 7v9" stroke="#000" strokeWidth="3" />
                <path d="M0 5.500h5M1.500 3v5M4 11.500h7M7.500 8v7" stroke="#0c8a80" />
              </Svg>
            </TitleButton>
            <TitleButton type="button" aria-label="全部折叠">
              <Svg width="16" height="16" viewBox="0 0 16 16" shapeRendering="crispEdges">
                <path d="M0 5.500h9M7 11.500h9" stroke="#000" strokeWidth="3" />
                <path d="M1 5.500h7M8 11.500h7" stroke="#0c8a80" />
              </Svg>
            </TitleButton>
          </NavTools>
          <NavTree>
            {groups.map((g, gi) => (
              <React.Fragment key={g.name}>
                <Branch $last={gi === groups.length - 1}>
                  <Toggle open={!!g.children} name={g.name} />
                  <Icon name={g.children ? "folderOpen" : "folder"} />
                  <FolderText>{g.name}</FolderText>
                  {g.name === "CAD识别" && (
                    <>
                      <Icon name="cad" />
                      <NewTag>NEW</NewTag>
                    </>
                  )}
                </Branch>
                {g.children?.map((c, i, all) => (
                  <Leaf key={c.name} $last={i === all.length - 1}>
                    <Icon name={c.icon} />
                    <NodeText $selected={c.selected}>{c.name}</NodeText>
                  </Leaf>
                ))}
              </React.Fragment>
            ))}
          </NavTree>
        </Nav>
        <Panels>
          <PanelTitle>
            构件列表
            <PaneActions />
          </PanelTitle>
          <PanelTools>
            <ToolItem icon="create" label="新建" menu={8} />
            <ToolItem icon="remove" title="删除" />
            <ToolItem icon="copy" title="复制" />
          </PanelTools>
          <SearchRow>
            <input type="text" placeholder="搜索构件..." aria-label="搜索构件" />
            <ToolItem icon="search" title="搜索" />
          </SearchRow>
          <ComponentTree>
            <TreeRow>
              <Toggle open name="现浇板" />
              <Icon name="slab" />
              现浇板
            </TreeRow>
            <TreeRow $child>
              <Icon name="gear" />
              <Picked>B-1</Picked>
            </TreeRow>
          </ComponentTree>
          <PanelTitle>
            属性编辑器
            <PaneActions />
          </PanelTitle>
          <GridBox>
            <Grid>
              <colgroup>
                <col width="21" />
                <col width="121" />
                <col />
                <col width="31" />
              </colgroup>
              <thead>
                <tr>
                  <th />
                  <th scope="col">属性名称</th>
                  <ValueHead scope="col">属性值</ValueHead>
                  <th scope="col">附加</th>
                </tr>
              </thead>
              <tbody>
                {properties.map((p, i) => (
                  <tr key={p.name}>
                    <RowNumber scope="row" $current={i === 0}>{i + 1}</RowNumber>
                    <NameCell $tone={p.tone} $current={i === 0}>
                      <NameInner $toggle={p.group}>
                        {p.group && (
                          <GroupToggle type="button" aria-label="展开显示样式">
                            <Svg width="13" height="13" viewBox="0 0 13 13" shapeRendering="crispEdges">
                              <rect x=".5" y=".5" width="12" height="12" fill="#f6f5ef" stroke="#b9b7ab" />
                              <path d="M3 6.500h7M6.500 3v7" stroke="#000" />
                            </Svg>
                          </GroupToggle>
                        )}
                        {p.name}
                      </NameInner>
                    </NameCell>
                    <ValueCell $current={i === 0}>{p.value}</ValueCell>
                    <CheckCell>{p.check && <input type="checkbox" aria-label={`附加 ${p.name}`} />}</CheckCell>
                  </tr>
                ))}
              </tbody>
            </Grid>
          </GridBox>
        </Panels>
        <ViewColumn>
          <Bars>
            <BarRow>
              <Band>
                <Grip />
                <Tools items={editTools} />
              </Band>
            </BarRow>
            <BarRow>
              <Band>
                <Grip />
                <ComboGroup>
                  <Combo label="楼层" value="首层" width={57} />
                  <Combo label="构件类型" value="板" width={69} />
                  <Combo label="构件" value="现浇板" width={69} />
                  <Combo label="构件名称" value="B-1" width={69} />
                  <Combo label="分层" value="分层1" width={69} />
                </ComboGroup>
                <Divider />
                <Tools items={componentTools} />
              </Band>
              <Band $grow>
                <Grip />
                <Tools items={axisTools} />
              </Band>
            </BarRow>
            <BarRow>
              <Band $grow>
                <Grip />
                <Tools items={drawTools} />
                <Combo label="画弧方式" value="" width={56} />
                <Tools items={layoutTools} />
              </Band>
            </BarRow>
          </Bars>
          <Canvas>
            <Model />
          </Canvas>
        </ViewColumn>
      </Workspace>
      <Marks />
    </Page>
  );
}
